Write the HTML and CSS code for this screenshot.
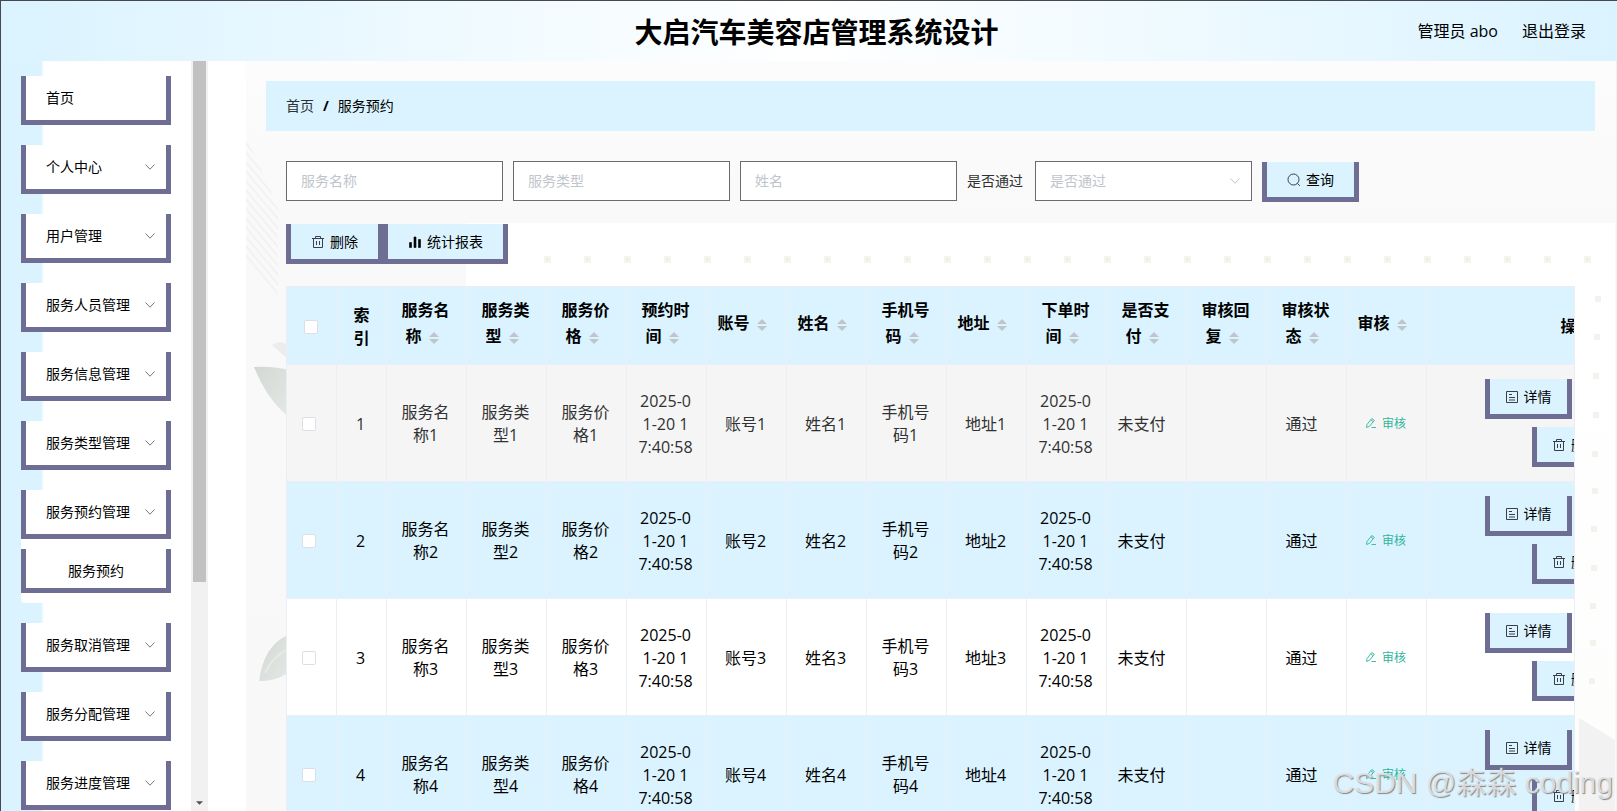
FILE: index.html
```html
<!DOCTYPE html>
<html lang="zh-CN">
<head>
<meta charset="utf-8">
<title>大启汽车美容店管理系统设计</title>
<link rel="stylesheet" href="styles.css">
</head>
<body>
<svg class="symbols" aria-hidden="true">
  <symbol id="i-down" viewBox="0 0 14 14"><path d="M2.500 4.500 7 9.200l4.500-4.700" fill="none" stroke="currentColor"/></symbol>
  <symbol id="i-search" viewBox="0 0 14 14"><circle cx="6.500" cy="6.500" r="5.500" fill="none" stroke="currentColor"/><path d="m10.300 10.300 2.500 2.500" stroke="currentColor"/></symbol>
  <symbol id="i-trash" viewBox="0 0 14 14"><path d="M1 3.500h12M4.500 3.500v-2h5v2M2.500 3.500v9h9v-9M5.500 6v4M8.500 6v4" fill="none" stroke="currentColor"/></symbol>
  <symbol id="i-chart" viewBox="0 0 14 14"><path d="M1.500 7.500h2v5h-2zM6 2h2v10.500H6zM10.500 4.500h2v8h-2z" fill="currentColor" stroke="currentColor" stroke-width=".6"/></symbol>
  <symbol id="i-doc" viewBox="0 0 14 14"><path d="M1.500 1.500h11v11h-11zM4 4.500h3M4 7.500h6M4 10h6" fill="none" stroke="currentColor"/></symbol>
  <symbol id="i-edit" viewBox="0 0 12 12"><path d="M1.500 10.500 2 7.500 6.800 1.500 9.300 3.300 4.500 9.300zM5.800 2.800 8.200 4.700M6.500 10.500h4.500" fill="none" stroke="currentColor" stroke-width=".9"/></symbol>
  <symbol id="i-sort" viewBox="0 0 10 14"><path d="M0 6 5 1l5 5zM0 8l5 5 5-5z" fill="#c0c4cc"/></symbol>
</svg>

<header class="header">
  <h1 class="title">大启汽车美容店管理系统设计</h1>
  <div class="user"><span>管理员 abo</span><a href="#">退出登录</a></div>
</header>

<div class="shell">
  <aside class="sidebar">
    <nav class="menu">
      <a class="item" href="#">首页</a>
      <button class="item">个人中心<svg class="ico"><use href="#i-down"/></svg></button>
      <button class="item">用户管理<svg class="ico"><use href="#i-down"/></svg></button>
      <button class="item">服务人员管理<svg class="ico"><use href="#i-down"/></svg></button>
      <button class="item">服务信息管理<svg class="ico"><use href="#i-down"/></svg></button>
      <button class="item">服务类型管理<svg class="ico"><use href="#i-down"/></svg></button>
      <div class="group">
        <button class="item">服务预约管理<svg class="ico"><use href="#i-down"/></svg></button>
        <div class="submenu"><a class="subitem" href="#">服务预约</a></div>
      </div>
      <button class="item">服务取消管理<svg class="ico"><use href="#i-down"/></svg></button>
      <button class="item">服务分配管理<svg class="ico"><use href="#i-down"/></svg></button>
      <button class="item">服务进度管理<svg class="ico"><use href="#i-down"/></svg></button>
    </nav>
    <div class="scrollbar"><div class="thumb"></div><svg class="arrow" viewBox="0 0 8 4"><path d="M0 0h8L4 4z" fill="#505050"/></svg></div>
  </aside>

  <main class="content">
    <svg class="decor" aria-hidden="true">
      <defs>
        <linearGradient id="fade" x1="0" y1="0" x2="0" y2="1"><stop offset="0" stop-color="#fff"/><stop offset="1" stop-color="#fcfcfb"/></linearGradient>
        <pattern id="dots" width="40" height="40" patternUnits="userSpaceOnUse" x="281" y="178"><path d="M17 17h7v7h-7z" fill="#f5f5f0"/><path d="M19 19h3v3h-3z" fill="#efefe8"/></pattern>
        <pattern id="hatch" width="6" height="6" patternUnits="userSpaceOnUse" patternTransform="rotate(-40)"><path d="M0 0h2v6H0z" fill="#f2f3f1"/></pattern>
        <linearGradient id="leaf" x1="0" y1="0" x2="1" y2="1"><stop offset="0" stop-color="#d2d7d3"/><stop offset="1" stop-color="#e4e9e5"/></linearGradient>
      </defs>
      <rect x="220" y="162" width="1149" height="900" fill="url(#fade)"/>
      <rect x="282" y="178" width="1080" height="40" fill="url(#dots)"/>
      <g fill="#f2f3ec"><path d="M1349 235h6v6h-6zM1348 273h6v6h-6zM1347 312h6v6h-6zM1347 351h6v6h-6zM1346 390h6v6h-6zM1346 427h6v6h-6zM1345 465h6v6h-6zM1345 504h6v6h-6zM1344 542h6v6h-6zM1344 579h6v6h-6zM1343 617h6v6h-6z"/></g>
      <path d="M0 75 Q20 120 32 145 L32 236 Q10 215 0 195Z" fill="url(#hatch)"/>
      <path d="M8 306q18-1 34 3v46Q22 340 8 306z" fill="url(#leaf)"/>
      <path d="M26 284q8-6 16 0v14z" fill="#ebedeb"/>
      <path d="M42 574Q18 584 13 620q15 1 29-8z" fill="url(#leaf)"/>
      <path d="M19 612Q26 596 42 588" fill="none" stroke="#e6e9e6" stroke-width="2"/>
      <path d="M1333 657l36 22v400h-36z" fill="#f2f2f2"/>
    </svg>

    <nav class="crumbs"><a href="#">首页</a><b>/</b><span>服务预约</span></nav>

    <section class="panel">
      <form class="search">
        <input class="field" type="text" placeholder="服务名称" aria-label="服务名称">
        <input class="field" type="text" placeholder="服务类型" aria-label="服务类型">
        <input class="field" type="text" placeholder="姓名" aria-label="姓名">
        <div class="pair">
          <label for="pass">是否通过</label>
          <div class="pick"><select class="field" id="pass"><option>是否通过</option></select><svg class="ico"><use href="#i-down"/></svg></div>
        </div>
        <button class="btn" type="button"><svg class="ico"><use href="#i-search"/></svg>查询</button>
      </form>

      <div class="actions">
        <button class="btn"><svg class="ico"><use href="#i-trash"/></svg>删除</button>
        <button class="btn"><svg class="ico dark"><use href="#i-chart"/></svg>统计报表</button>
      </div>

      <div class="tablebox">
        <table class="table">
          <colgroup><col class="c-s" span="2"><col class="c-m" span="13"><col class="c-l"></colgroup>
          <thead>
            <tr>
              <th class="plain pick-cell"><input class="check" type="checkbox" aria-label="全选"></th>
              <th class="plain">索<br>引</th>
              <th>服务名<br>称<svg class="sort"><use href="#i-sort"/></svg></th>
              <th>服务类<br>型<svg class="sort"><use href="#i-sort"/></svg></th>
              <th>服务价<br>格<svg class="sort"><use href="#i-sort"/></svg></th>
              <th>预约时<br>间<svg class="sort"><use href="#i-sort"/></svg></th>
              <th>账号<svg class="sort"><use href="#i-sort"/></svg></th>
              <th>姓名<svg class="sort"><use href="#i-sort"/></svg></th>
              <th>手机号<br>码<svg class="sort"><use href="#i-sort"/></svg></th>
              <th>地址<svg class="sort"><use href="#i-sort"/></svg></th>
              <th>下单时<br>间<svg class="sort"><use href="#i-sort"/></svg></th>
              <th>是否支<br>付<svg class="sort"><use href="#i-sort"/></svg></th>
              <th>审核回<br>复<svg class="sort"><use href="#i-sort"/></svg></th>
              <th>审核状<br>态<svg class="sort"><use href="#i-sort"/></svg></th>
              <th>审核<svg class="sort"><use href="#i-sort"/></svg></th>
              <th class="plain">操作</th>
            </tr>
          </thead>
          <tbody>
            <tr class="hover">
              <td class="pick-cell"><input class="check" type="checkbox" aria-label="选择1"></td><td>1</td><td>服务名<br>称1</td><td>服务类<br>型1</td><td>服务价<br>格1</td><td>2025-0<br>1-20 1<br>7:40:58</td><td>账号1</td><td>姓名1</td><td>手机号<br>码1</td><td>地址1</td><td>2025-0<br>1-20 1<br>7:40:58</td><td class="state">未支付</td><td></td><td class="state">通过</td>
              <td><button class="link"><svg><use href="#i-edit"/></svg>审核</button></td>
              <td class="ops-cell"><div class="ops"><button class="btn small"><svg class="ico"><use href="#i-doc"/></svg>详情</button><button class="btn small second"><svg class="ico"><use href="#i-trash"/></svg>删除</button></div></td>
            </tr>
            <tr class="blue">
              <td class="pick-cell"><input class="check" type="checkbox" aria-label="选择2"></td><td>2</td><td>服务名<br>称2</td><td>服务类<br>型2</td><td>服务价<br>格2</td><td>2025-0<br>1-20 1<br>7:40:58</td><td>账号2</td><td>姓名2</td><td>手机号<br>码2</td><td>地址2</td><td>2025-0<br>1-20 1<br>7:40:58</td><td class="state">未支付</td><td></td><td class="state">通过</td>
              <td><button class="link"><svg><use href="#i-edit"/></svg>审核</button></td>
              <td class="ops-cell"><div class="ops"><button class="btn small"><svg class="ico"><use href="#i-doc"/></svg>详情</button><button class="btn small second"><svg class="ico"><use href="#i-trash"/></svg>删除</button></div></td>
            </tr>
            <tr>
              <td class="pick-cell"><input class="check" type="checkbox" aria-label="选择3"></td><td>3</td><td>服务名<br>称3</td><td>服务类<br>型3</td><td>服务价<br>格3</td><td>2025-0<br>1-20 1<br>7:40:58</td><td>账号3</td><td>姓名3</td><td>手机号<br>码3</td><td>地址3</td><td>2025-0<br>1-20 1<br>7:40:58</td><td class="state">未支付</td><td></td><td class="state">通过</td>
              <td><button class="link"><svg><use href="#i-edit"/></svg>审核</button></td>
              <td class="ops-cell"><div class="ops"><button class="btn small"><svg class="ico"><use href="#i-doc"/></svg>详情</button><button class="btn small second"><svg class="ico"><use href="#i-trash"/></svg>删除</button></div></td>
            </tr>
            <tr class="blue">
              <td class="pick-cell"><input class="check" type="checkbox" aria-label="选择4"></td><td>4</td><td>服务名<br>称4</td><td>服务类<br>型4</td><td>服务价<br>格4</td><td>2025-0<br>1-20 1<br>7:40:58</td><td>账号4</td><td>姓名4</td><td>手机号<br>码4</td><td>地址4</td><td>2025-0<br>1-20 1<br>7:40:58</td><td class="state">未支付</td><td></td><td class="state">通过</td>
              <td><button class="link"><svg><use href="#i-edit"/></svg>审核</button></td>
              <td class="ops-cell"><div class="ops"><button class="btn small"><svg class="ico"><use href="#i-doc"/></svg>详情</button><button class="btn small second"><svg class="ico"><use href="#i-trash"/></svg>删除</button></div></td>
            </tr>
          </tbody>
        </table>
      </div>
    </section>
  </main>
</div>
<div class="watermark">CSDN @森森 coding</div>
</body>
</html>
```
FILE: styles.css
```css
:root {
  --blue: #daf3ff;
  --purple: #6e6e94;
  --line: #ebeef5;
}
* { box-sizing: border-box; }
body {
  margin: 0;
  height: 100vh;
  overflow: hidden;
  display: flex;
  flex-direction: column;
  position: relative;
  border-top: 1px solid #45494f;
  border-left: 1px solid #45494f;
  background: #fff;
  color: #000;
  font: 14px/20px "Open Sans", "Noto Sans CJK SC", sans-serif;
}
button, input, select { font: inherit; color: inherit; }
button { cursor: pointer; }
a { color: inherit; text-decoration: none; }
.symbols { position: absolute; width: 0; height: 0; }
.ico { width: 14px; height: 14px; flex: none; color: #3a3f48; }
.ico.dark { color: #000; }

.header {
  flex: none;
  height: 60px;
  display: grid;
  grid-template-columns: 1fr auto 1fr;
  align-items: center;
  padding: 0 31px 0 46px;
  background: linear-gradient(90deg, var(--blue), #fff, var(--blue));
}
.title { grid-column: 2; margin: 0; padding-top: 2px; font-size: 28px; line-height: 40px; font-weight: 700; }
.user { display: flex; justify-content: flex-end; gap: 24px; font-size: 16px; }

.shell { flex: 1; min-height: 0; display: flex; }
.sidebar {
  flex: none;
  width: 207px;
  display: flex;
  justify-content: space-between;
  overflow: hidden;
  background: linear-gradient(90deg, var(--blue) 40px, #fff 43px);
}
.menu {
  width: 170px;
  padding: 15px 0 0 20px;
  display: flex;
  flex-direction: column;
  gap: 20px;
}
.item {
  flex: none;
  width: 100%;
  height: 49px;
  display: flex;
  align-items: center;
  justify-content: space-between;
  padding: 0 9px 0 20px;
  border: 5px solid var(--purple);
  border-top: 0;
  background: #fff;
  text-align: left;
}
.item .ico { color: #777; }
.submenu { padding: 10px 0; background: #fff; border-radius: 0 0 4px 4px; }
.subitem {
  display: flex;
  height: 44px;
  padding-top: 4px;
  align-items: center;
  justify-content: center;
  border: 5px solid var(--purple);
  border-top: 0;
}
.scrollbar {
  width: 17px;
  padding: 0 2px 6px;
  display: flex;
  flex-direction: column;
  justify-content: space-between;
  align-items: center;
  background: #f1f1f1;
}
.thumb { width: 100%; height: 70%; background: #c1c1c1; }
.arrow { width: 7px; height: 4px; }

.content {
  flex: 1;
  min-width: 0;
  margin-left: 38px;
  padding: 20px 21px 0 20px;
  position: relative;
  overflow: hidden;
  border-right: 1px solid #f0f0f0;
  background: linear-gradient(#fcfcfc, #f9f9f9 150px, #f8f8f8);
}
.decor { position: absolute; top: 0; left: 0; width: 100%; height: 100%; }
.crumbs {
  position: relative;
  height: 50px;
  display: flex;
  align-items: center;
  gap: 9px;
  padding: 0 20px;
  background: var(--blue);
}
.crumbs a { color: #303133; }
.panel { position: relative; padding: 30px 20px 0; }
.search { display: flex; align-items: flex-end; gap: 10px; height: 41px; }
.search > .field, .pair { margin-bottom: 1px; }
.field {
  display: block;
  width: 217px;
  height: 40px;
  padding: 0 15px 2px 14px;
  border: 1px solid #6b6b6f;
  border-radius: 0;
  background: #fff;
  appearance: none;
}
.field::placeholder { color: #c0c4cc; opacity: 1; }
select.field { color: #c0c4cc; padding-bottom: 0; }
.pair { display: flex; align-items: center; gap: 12px; color: #303133; }
.pick { position: relative; }
.pick .ico { position: absolute; right: 10px; top: 13px; color: #c0c4cc; }
.btn {
  height: 40px;
  display: flex;
  align-items: center;
  gap: 5px;
  padding: 0 20px;
  border: 5px solid var(--purple);
  border-top: 0;
  background: var(--blue);
  white-space: nowrap;
}
.btn.small { padding: 0 15px; }
.actions { display: flex; margin: 22px 0; }

.tablebox { overflow: hidden; border: 1px solid var(--line); border-bottom: 0; }
.table {
  width: 1440px;
  table-layout: fixed;
  border-spacing: 0;
  font-size: 16px;
  line-height: 23px;
  text-align: center;
  background: #fff;
}
.c-s { width: 50px; }
.c-m { width: 80px; }
.c-l { width: 300px; }
.table th, .table td {
  padding: 0 2px 0 0;
  border-right: 1px solid var(--line);
  border-bottom: 1px solid var(--line);
}
.table th { height: 78px; padding-bottom: 5px; line-height: 26px; background: var(--blue); }
.table th.plain { padding: 2px 0 0; line-height: 23px; }
.table th.pick-cell { padding: 0 2px 0 0; }
.table td { height: 117px; padding-top: 2px; }
.table td.pick-cell { padding: 0 6px 0 0; }
.table td.state { padding-right: 10px; }
.table td.ops-cell { padding-top: 0; }
.hover { background: #f5f5f5; color: #303133; }
.blue { background: var(--blue); }
.sort { width: 10px; height: 14px; margin: 0 7px; vertical-align: -3px; }
.check {
  display: inline-block;
  width: 14px;
  height: 14px;
  margin: 0;
  vertical-align: middle;
  appearance: none;
  border: 1px solid #dcdfe6;
  border-radius: 2px;
  background: #fff;
}
.link {
  display: inline-flex;
  align-items: center;
  gap: 5px;
  padding: 0 0 2px;
  border: 0;
  background: none;
  color: #2fb59b;
  font-size: 12px;
}
.link svg { width: 12px; height: 12px; }
.ops {
  width: 182px;
  margin: 0 auto;
  display: flex;
  flex-direction: column;
  align-items: flex-start;
  gap: 8px;
  font-size: 14px;
  line-height: 20px;
  color: #000;
}
.ops .second { align-self: center; }
.watermark {
  position: absolute;
  right: 4px;
  bottom: 8px;
  color: rgba(225, 228, 232, .9);
  font: 30px/40px "Liberation Sans", "Noto Sans CJK SC", sans-serif;
  text-shadow: 1px 1px 1px #888;
  pointer-events: none;
}
```
